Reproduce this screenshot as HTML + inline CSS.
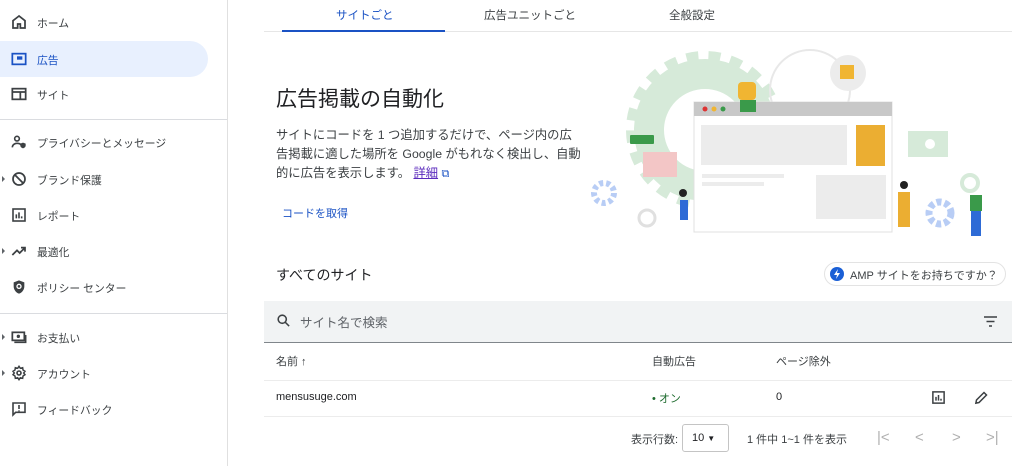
<!DOCTYPE html>
<html><head><meta charset="utf-8"><style>
*{box-sizing:border-box;margin:0;padding:0}
body{width:1024px;height:466px;overflow:hidden;background:#fff;font-family:"Liberation Sans","Noto Sans CJK JP",sans-serif;color:#202124;position:relative}
.abs{position:absolute;white-space:nowrap}
.side{position:absolute;left:0;top:0;width:228px;height:466px;border-right:1px solid #e0e0e0}
.it{position:absolute;left:0;width:208px;height:36px;font-size:10.8px;color:#3c4043}
.it span{position:absolute;left:37px;top:11px}
.it svg{position:absolute;left:11px;top:10px}
.sel{background:#e8f0fe;border-radius:0 18px 18px 0;color:#1a52c4}
.sep{position:absolute;left:0;width:227px;height:1px;background:#dadce0}
.car{position:absolute;left:2px;width:0;height:0;border-top:3px solid transparent;border-bottom:3px solid transparent;border-left:3px solid #5f6368}
</style></head><body>
<div class="side">
<div class="it" style="top:4px"><svg width="16" height="16" viewBox="0 0 24 24"><path d="M12 3L3 10v11h7v-6h4v6h7V10z" fill="none" stroke="#3c4043" stroke-width="2.6"/></svg><span>ホーム</span></div>
<div class="it sel" style="top:41px"><svg width="16" height="16" viewBox="0 0 24 24"><rect x="2" y="4" width="20" height="16" fill="none" stroke="#1a52c4" stroke-width="2.6"/><rect x="9" y="8" width="8" height="5" fill="#1a52c4"/></svg><span>広告</span></div>
<div class="it" style="top:76px"><svg width="16" height="16" viewBox="0 0 24 24"><rect x="2" y="4" width="20" height="16" fill="none" stroke="#3c4043" stroke-width="2.6"/><path d="M2 9h20M14 9v11" stroke="#3c4043" stroke-width="2.6"/></svg><span>サイト</span></div>
<div class="sep" style="top:119px"></div>
<div class="it" style="top:124px"><svg width="16" height="16" viewBox="0 0 24 24"><circle cx="9" cy="7" r="3.5" fill="none" stroke="#3c4043" stroke-width="2.4"/><path d="M2 20c0-4 4-6 7-6s5 1 6 2" fill="none" stroke="#3c4043" stroke-width="2.4"/><path d="M18 13l4 1.5v3c0 2-2 3.5-4 4-2-.5-4-2-4-4v-3z" fill="#3c4043"/></svg><span>プライバシーとメッセージ</span></div>
<div class="car" style="top:176px"></div>
<div class="it" style="top:161px"><svg width="16" height="16" viewBox="0 0 24 24"><circle cx="12" cy="12" r="9" fill="none" stroke="#3c4043" stroke-width="2.6"/><path d="M6 6l12 12" stroke="#3c4043" stroke-width="2.6"/></svg><span>ブランド保護</span></div>
<div class="it" style="top:197px"><svg width="16" height="16" viewBox="0 0 24 24"><rect x="3" y="3" width="18" height="18" fill="none" stroke="#3c4043" stroke-width="2.4"/><path d="M8 17v-6M12 17V8M16 17v-3" stroke="#3c4043" stroke-width="2.4"/></svg><span>レポート</span></div>
<div class="car" style="top:248px"></div>
<div class="it" style="top:233px"><svg width="16" height="16" viewBox="0 0 24 24"><path d="M2 18l7-7 4 4 8-8M15 7h6v6" fill="none" stroke="#3c4043" stroke-width="2.6"/></svg><span>最適化</span></div>
<div class="it" style="top:269px"><svg width="16" height="16" viewBox="0 0 24 24"><path d="M12 2l8 3v6c0 5-3.5 9.5-8 11-4.5-1.5-8-6-8-11V5z" fill="#3c4043"/><circle cx="12" cy="11" r="3" fill="none" stroke="#fff" stroke-width="2"/></svg><span>ポリシー センター</span></div>
<div class="sep" style="top:313px"></div>
<div class="car" style="top:334px"></div>
<div class="it" style="top:319px"><svg width="16" height="16" viewBox="0 0 24 24"><rect x="2" y="5" width="18" height="12" fill="none" stroke="#3c4043" stroke-width="2.6"/><circle cx="11" cy="11" r="2.5" fill="#3c4043"/><path d="M5 20h17V9" fill="none" stroke="#3c4043" stroke-width="2.4"/></svg><span>お支払い</span></div>
<div class="car" style="top:370px"></div>
<div class="it" style="top:355px"><svg width="16" height="16" viewBox="0 0 24 24"><circle cx="12" cy="12" r="3" fill="none" stroke="#3c4043" stroke-width="2.4"/><path d="M12 2l2 3 3.5-1 .5 3.5 3 2-2 2.5 2 2.5-3 2-.5 3.5-3.5-1-2 3-2-3-3.5 1-.5-3.5-3-2 2-2.5-2-2.5 3-2 .5-3.5 3.5 1z" fill="none" stroke="#3c4043" stroke-width="2.2"/></svg><span>アカウント</span></div>
<div class="it" style="top:391px"><svg width="16" height="16" viewBox="0 0 24 24"><path d="M3 3h18v14H7l-4 4z" fill="none" stroke="#3c4043" stroke-width="2.4"/><path d="M12 6v6M12 14v1.5" stroke="#3c4043" stroke-width="2.4"/></svg><span>フィードバック</span></div>
</div>

<div class="abs" style="left:336px;top:7px;font-size:11.5px;color:#1a52c4">サイトごと</div>
<div class="abs" style="left:484px;top:7px;font-size:11.5px;color:#3c4043">広告ユニットごと</div>
<div class="abs" style="left:669px;top:7px;font-size:11.5px;color:#3c4043">全般設定</div>
<div class="abs" style="left:264px;top:31px;width:748px;height:1px;background:#e6e6e6"></div>
<div class="abs" style="left:282px;top:30px;width:163px;height:2px;background:#1a52c4"></div>

<div class="abs" style="left:276px;top:83px;font-size:21px;color:#202124">広告掲載の自動化</div>
<div class="abs" style="left:276px;top:126px;font-size:12.3px;line-height:19px;color:#3c4043;white-space:normal;width:305px">サイトにコードを 1 つ追加するだけで、ページ内の広告掲載に適した場所を Google がもれなく検出し、自動的に広告を表示します。 <span style="color:#5b2bbd;text-decoration:underline">詳細</span> <span style="color:#1a52c4;font-size:11px">⧉</span></div>
<div class="abs" style="left:282px;top:205px;font-size:11px;color:#1a52c4">コードを取得</div>

<svg class="abs" style="left:590px;top:40px" width="420" height="210" viewBox="0 0 420 210">
<circle cx="115" cy="90" r="56" fill="none" stroke="#d6ead9" stroke-width="30"/>
<circle cx="115" cy="90" r="74" fill="none" stroke="#d6ead9" stroke-width="10" stroke-dasharray="12 10"/>
<circle cx="220" cy="50" r="40" fill="none" stroke="#e8e8e8" stroke-width="2"/>
<circle cx="258" cy="33" r="18" fill="#ececec"/><rect x="250" y="25" width="14" height="14" fill="#f0b532"/>
<rect x="104" y="62" width="198" height="130" fill="#fff" stroke="#e0e0e0"/>
<rect x="104" y="62" width="198" height="14" fill="#c8c8c8"/>
<circle cx="115" cy="69" r="2.5" fill="#d33"/><circle cx="124" cy="69" r="2.5" fill="#f0b532"/><circle cx="133" cy="69" r="2.5" fill="#3a9a4a"/>
<rect x="111" y="85" width="146" height="40" fill="#ececec"/>
<rect x="266" y="85" width="29" height="41" fill="#ebae32"/>
<rect x="112" y="134" width="82" height="4" fill="#ececec"/><rect x="112" y="142" width="62" height="4" fill="#ececec"/>
<rect x="226" y="135" width="70" height="44" fill="#ececec"/>
<rect x="40" y="95" width="24" height="9" fill="#3a9a4a" rx="1"/>
<rect x="53" y="112" width="34" height="25" fill="#f3c6c6"/>
<rect x="318" y="91" width="40" height="26" fill="#d6ead9"/><circle cx="340" cy="104" r="5" fill="#fff"/>
<circle cx="14" cy="153" r="10" fill="none" stroke="#b8cdf5" stroke-width="6" stroke-dasharray="4 3"/>
<circle cx="57" cy="178" r="8" fill="none" stroke="#e0e0e0" stroke-width="3"/>
<circle cx="350" cy="173" r="11" fill="none" stroke="#b8cdf5" stroke-width="7" stroke-dasharray="5 3"/>
<circle cx="380" cy="143" r="8" fill="none" stroke="#d6ead9" stroke-width="4"/>
<rect x="148" y="42" width="18" height="18" fill="#f0b532" rx="4"/><rect x="150" y="60" width="16" height="12" fill="#3a9a4a"/>
<rect x="90" y="160" width="8" height="20" fill="#2e6bd6"/><circle cx="93" cy="153" r="4" fill="#222"/>
<rect x="308" y="152" width="12" height="35" fill="#ebae32"/><circle cx="314" cy="145" r="4" fill="#222"/>
<rect x="380" y="155" width="12" height="16" fill="#3a9a4a"/><rect x="381" y="171" width="10" height="25" fill="#2e6bd6"/>
</svg>

<div class="abs" style="left:276px;top:265px;font-size:14px">すべてのサイト</div>
<div class="abs" style="left:824px;top:262px;width:182px;height:24px;border:1px solid #e3e3e3;border-radius:12px;font-size:11px;color:#3c4043;padding:4px 0 0 25px">AMP サイトをお持ちですか？</div>
<svg class="abs" style="left:830px;top:267px" width="14" height="14" viewBox="0 0 14 14"><circle cx="7" cy="7" r="7" fill="#1a5fd6"/><path d="M8 2L4 8h3l-1 4 4-6H7z" fill="#fff"/></svg>

<div class="abs" style="left:264px;top:301px;width:748px;height:42px;background:#f1f3f4;border-bottom:1px solid #80868b"></div>
<svg class="abs" style="left:276px;top:313px" width="15" height="15" viewBox="0 0 24 24"><circle cx="10" cy="10" r="6.5" fill="none" stroke="#3c4043" stroke-width="2.5"/><path d="M15 15l6 6" stroke="#3c4043" stroke-width="2.5"/></svg>
<div class="abs" style="left:300px;top:312px;font-size:12.5px;color:#5f6368">サイト名で検索</div>
<svg class="abs" style="left:983px;top:315px" width="15" height="13" viewBox="0 0 15 13"><path d="M1 2h13M3.5 6.5h8M6 11h3" stroke="#3c4043" stroke-width="1.6"/></svg>

<div class="abs" style="left:276px;top:353px;font-size:11px;color:#3c4043">名前 ↑</div>
<div class="abs" style="left:652px;top:353px;font-size:11px;color:#3c4043">自動広告</div>
<div class="abs" style="left:776px;top:353px;font-size:11px;color:#3c4043">ページ除外</div>
<div class="abs" style="left:264px;top:380px;width:748px;height:1px;background:#ececec"></div>
<div class="abs" style="left:276px;top:391px;font-size:11px">mensusuge.com</div>
<div class="abs" style="left:652px;top:390px;font-size:11px;color:#1e6b2e">• オン</div>
<div class="abs" style="left:776px;top:391px;font-size:11px">0</div>
<svg class="abs" style="left:931px;top:390px" width="15" height="15" viewBox="0 0 24 24"><rect x="3" y="3" width="18" height="18" fill="none" stroke="#3c4043" stroke-width="2.4"/><path d="M8 17v-6M12 17V8M16 17v-3" stroke="#3c4043" stroke-width="2.4"/></svg>
<svg class="abs" style="left:974px;top:390px" width="15" height="15" viewBox="0 0 24 24"><path d="M3 21l1-5L16 4l4 4L8 20z" fill="none" stroke="#3c4043" stroke-width="2.4"/></svg>
<div class="abs" style="left:264px;top:416px;width:748px;height:1px;background:#ececec"></div>

<div class="abs" style="left:631px;top:431px;font-size:11px;color:#3c4043">表示行数:</div>
<div class="abs" style="left:682px;top:424px;width:47px;height:28px;border:1px solid #c4c4c4;border-radius:3px;font-size:11px;padding:7px 0 0 9px">10 <span style="font-size:8px">▼</span></div>
<div class="abs" style="left:747px;top:431px;font-size:11px;color:#3c4043">1 件中 1~1 件を表示</div>
<div class="abs" style="left:877px;top:429px;font-size:15px;color:#b0b0b0">|&lt;</div>
<div class="abs" style="left:915px;top:429px;font-size:15px;color:#b0b0b0">&lt;</div>
<div class="abs" style="left:952px;top:429px;font-size:15px;color:#b0b0b0">&gt;</div>
<div class="abs" style="left:986px;top:429px;font-size:15px;color:#b0b0b0">&gt;|</div>
</body></html>
